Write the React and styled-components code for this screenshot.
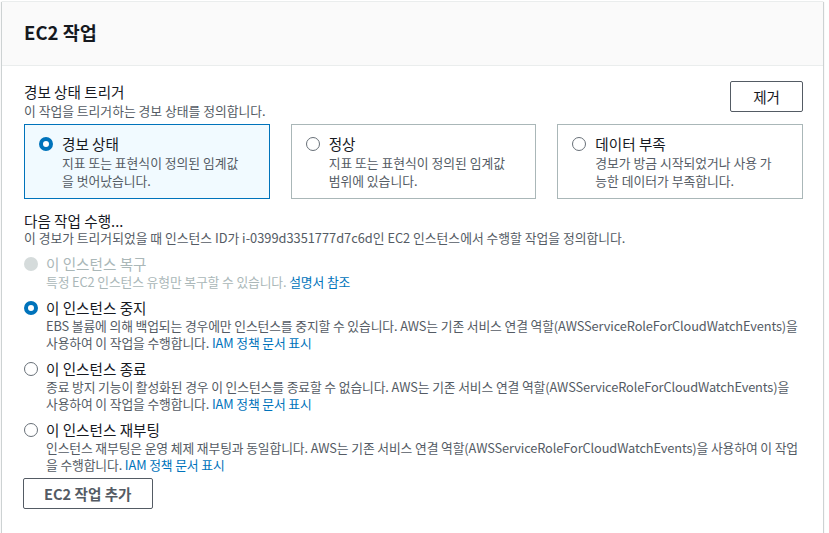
import React, { useState } from 'react';
import styled, { createGlobalStyle, css } from 'styled-components';

const GlobalStyle = createGlobalStyle`
  html, body {
    margin: 0;
    padding: 0;
    background: #ffffff;
  }
  body {
    font-family: "Noto Sans CJK KR", "Noto Sans", sans-serif;
    color: #16191f;
  }
`;

const Page = styled.div`
  padding: 1px 0 0 2px;
  width: 821px;
`;

const Panel = styled.section`
  background: #fff;
  border-top: 1px solid #eaeded;
  box-shadow: 0 1px 1px 0 rgba(0, 28, 36, 0.3), 1px 1px 1px 0 rgba(0, 28, 36, 0.15),
    -1px 1px 1px 0 rgba(0, 28, 36, 0.15);
`;

const Header = styled.header`
  height: 63px;
  display: flex;
  align-items: center;
  padding: 0 22px;
  background: #fafafa;
  border-bottom: 1px solid #eaeded;
`;

const Title = styled.h2`
  margin: 0 0 3px;
  font-size: 18.5px;
  font-weight: 700;
  line-height: 22px;
`;

const Body = styled.div`
  padding: 16px 20px 24px 22px;
`;

const TriggerHead = styled.div`
  display: flex;
  justify-content: space-between;
  align-items: flex-start;
`;

const Label = styled.div`
  font-size: 14.6px;
  line-height: 20px;
  color: #16191f;
`;

const Desc = styled.div`
  font-size: 12.8px;
  line-height: 17px;
  color: ${(p) => (p.$disabled ? '#aab7b8' : '#545b64')};
`;

const Button = styled.button`
  font-family: inherit;
  font-size: 14.6px;
  font-weight: ${(p) => p.$weight || 700};
  color: ${(p) => (p.$weight ? '#16191f' : '#545b64')};
  background: #fff;
  border: 1px solid #545b64;
  border-radius: 2px;
  padding: 0 ${(p) => p.$px || 20}px;
  height: 31px;
  cursor: pointer;
`;

const CardGrid = styled.div`
  display: grid;
  grid-template-columns: repeat(3, 1fr);
  gap: 21px;
  margin-top: 5px;
`;

const Card = styled.label`
  display: flex;
  gap: 9px;
  padding: 9px 22px 10px 14px;
  height: 75px;
  box-sizing: border-box;
  border: 1px solid ${(p) => (p.$on ? '#0073bb' : '#aab7b8')};
  background: ${(p) => (p.$on ? '#f1faff' : '#fff')};
  cursor: pointer;
`;

const Radio = styled.span`
  flex: none;
  width: 14px;
  height: 14px;
  margin-top: 3px;
  border-radius: 50%;
  box-sizing: border-box;
  background: #fff;
  border: 1px solid #687078;
  ${(p) =>
    p.$on &&
    css`
      border: 4px solid #0073bb;
    `}
  ${(p) =>
    p.$disabled &&
    css`
      border: none;
      background: #d5dbdb;
    `}
`;

const CardText = styled.div`
  display: flex;
  flex-direction: column;
  ${Desc} {
    line-height: 18px;
  }
`;

const Section = styled.div`
  margin-top: 12px;
  ${Desc} {
    margin-top: -2px;
  }
`;

const OptionList = styled.div`
  display: flex;
  flex-direction: column;
  gap: 8px;
  margin-top: 8px;
`;

const Option = styled.label`
  display: flex;
  gap: 8px;
  cursor: ${(p) => (p.$disabled ? 'default' : 'pointer')};
  ${Desc} {
    letter-spacing: -0.12px;
  }
`;

const OptionTitle = styled.div`
  font-size: 14.6px;
  line-height: 20px;
  color: ${(p) => (p.$disabled ? '#aab7b8' : '#16191f')};
  margin-bottom: -1px;
`;

const Link = styled.a`
  color: #0073bb;
  text-decoration: none;
`;

const AddRow = styled.div`
  margin-top: 5px;
  margin-left: -1px;
`;

const states = [
  { id: 'alarm', title: '경보 상태', desc: '지표 또는 표현식이 정의된 임계값을 벗어났습니다.' },
  { id: 'ok', title: '정상', desc: '지표 또는 표현식이 정의된 임계값 범위에 있습니다.' },
  { id: 'insufficient', title: '데이터 부족', desc: '경보가 방금 시작되었거나 사용 가능한 데이터가 부족합니다.' }
];

const roleText = 'AWS는 기존 서비스 연결 역할(AWSServiceRoleForCloudWatchEvents)을 사용하여 이 작업을 수행합니다. ';

const actions = [
  {
    id: 'recover',
    title: '이 인스턴스 복구',
    desc: '특정 EC2 인스턴스 유형만 복구할 수 있습니다. ',
    link: '설명서 참조',
    disabled: true
  },
  {
    id: 'stop',
    title: '이 인스턴스 중지',
    desc: 'EBS 볼륨에 의해 백업되는 경우에만 인스턴스를 중지할 수 있습니다. ' + roleText,
    link: 'IAM 정책 문서 표시'
  },
  {
    id: 'terminate',
    title: '이 인스턴스 종료',
    desc: '종료 방지 기능이 활성화된 경우 이 인스턴스를 종료할 수 없습니다. ' + roleText,
    link: 'IAM 정책 문서 표시'
  },
  {
    id: 'reboot',
    title: '이 인스턴스 재부팅',
    desc: '인스턴스 재부팅은 운영 체제 재부팅과 동일합니다. ' + roleText,
    link: 'IAM 정책 문서 표시'
  }
];

export default function App() {
  const [state, setState] = useState('alarm');
  const [action, setAction] = useState('stop');

  return (
    <Page>
      <GlobalStyle />
      <Panel>
        <Header>
          <Title>EC2 작업</Title>
        </Header>
        <Body>
          <TriggerHead>
            <div>
              <Label>경보 상태 트리거</Label>
              <Desc>이 작업을 트리거하는 경보 상태를 정의합니다.</Desc>
            </div>
            <Button $weight={400} $px={22} style={{ marginTop: -1 }}>
              제거
            </Button>
          </TriggerHead>
          <CardGrid>
            {states.map((s) => (
              <Card key={s.id} $on={state === s.id} onClick={() => setState(s.id)}>
                <Radio $on={state === s.id} />
                <CardText>
                  <Label>{s.title}</Label>
                  <Desc>{s.desc}</Desc>
                </CardText>
              </Card>
            ))}
          </CardGrid>
          <Section>
            <Label>다음 작업 수행...</Label>
            <Desc>이 경보가 트리거되었을 때 인스턴스 ID가 i-0399d3351777d7c6d인 EC2 인스턴스에서 수행할 작업을 정의합니다.</Desc>
          </Section>
          <OptionList>
            {actions.map((a) => (
              <Option key={a.id} $disabled={a.disabled} onClick={() => !a.disabled && setAction(a.id)}>
                <Radio $on={action === a.id} $disabled={a.disabled} />
                <div>
                  <OptionTitle $disabled={a.disabled}>{a.title}</OptionTitle>
                  <Desc $disabled={a.disabled}>
                    {a.desc}
                    <Link href="#">{a.link}</Link>
                  </Desc>
                </div>
              </Option>
            ))}
          </OptionList>
          <AddRow>
            <Button>EC2 작업 추가</Button>
          </AddRow>
        </Body>
      </Panel>
    </Page>
  );
}
